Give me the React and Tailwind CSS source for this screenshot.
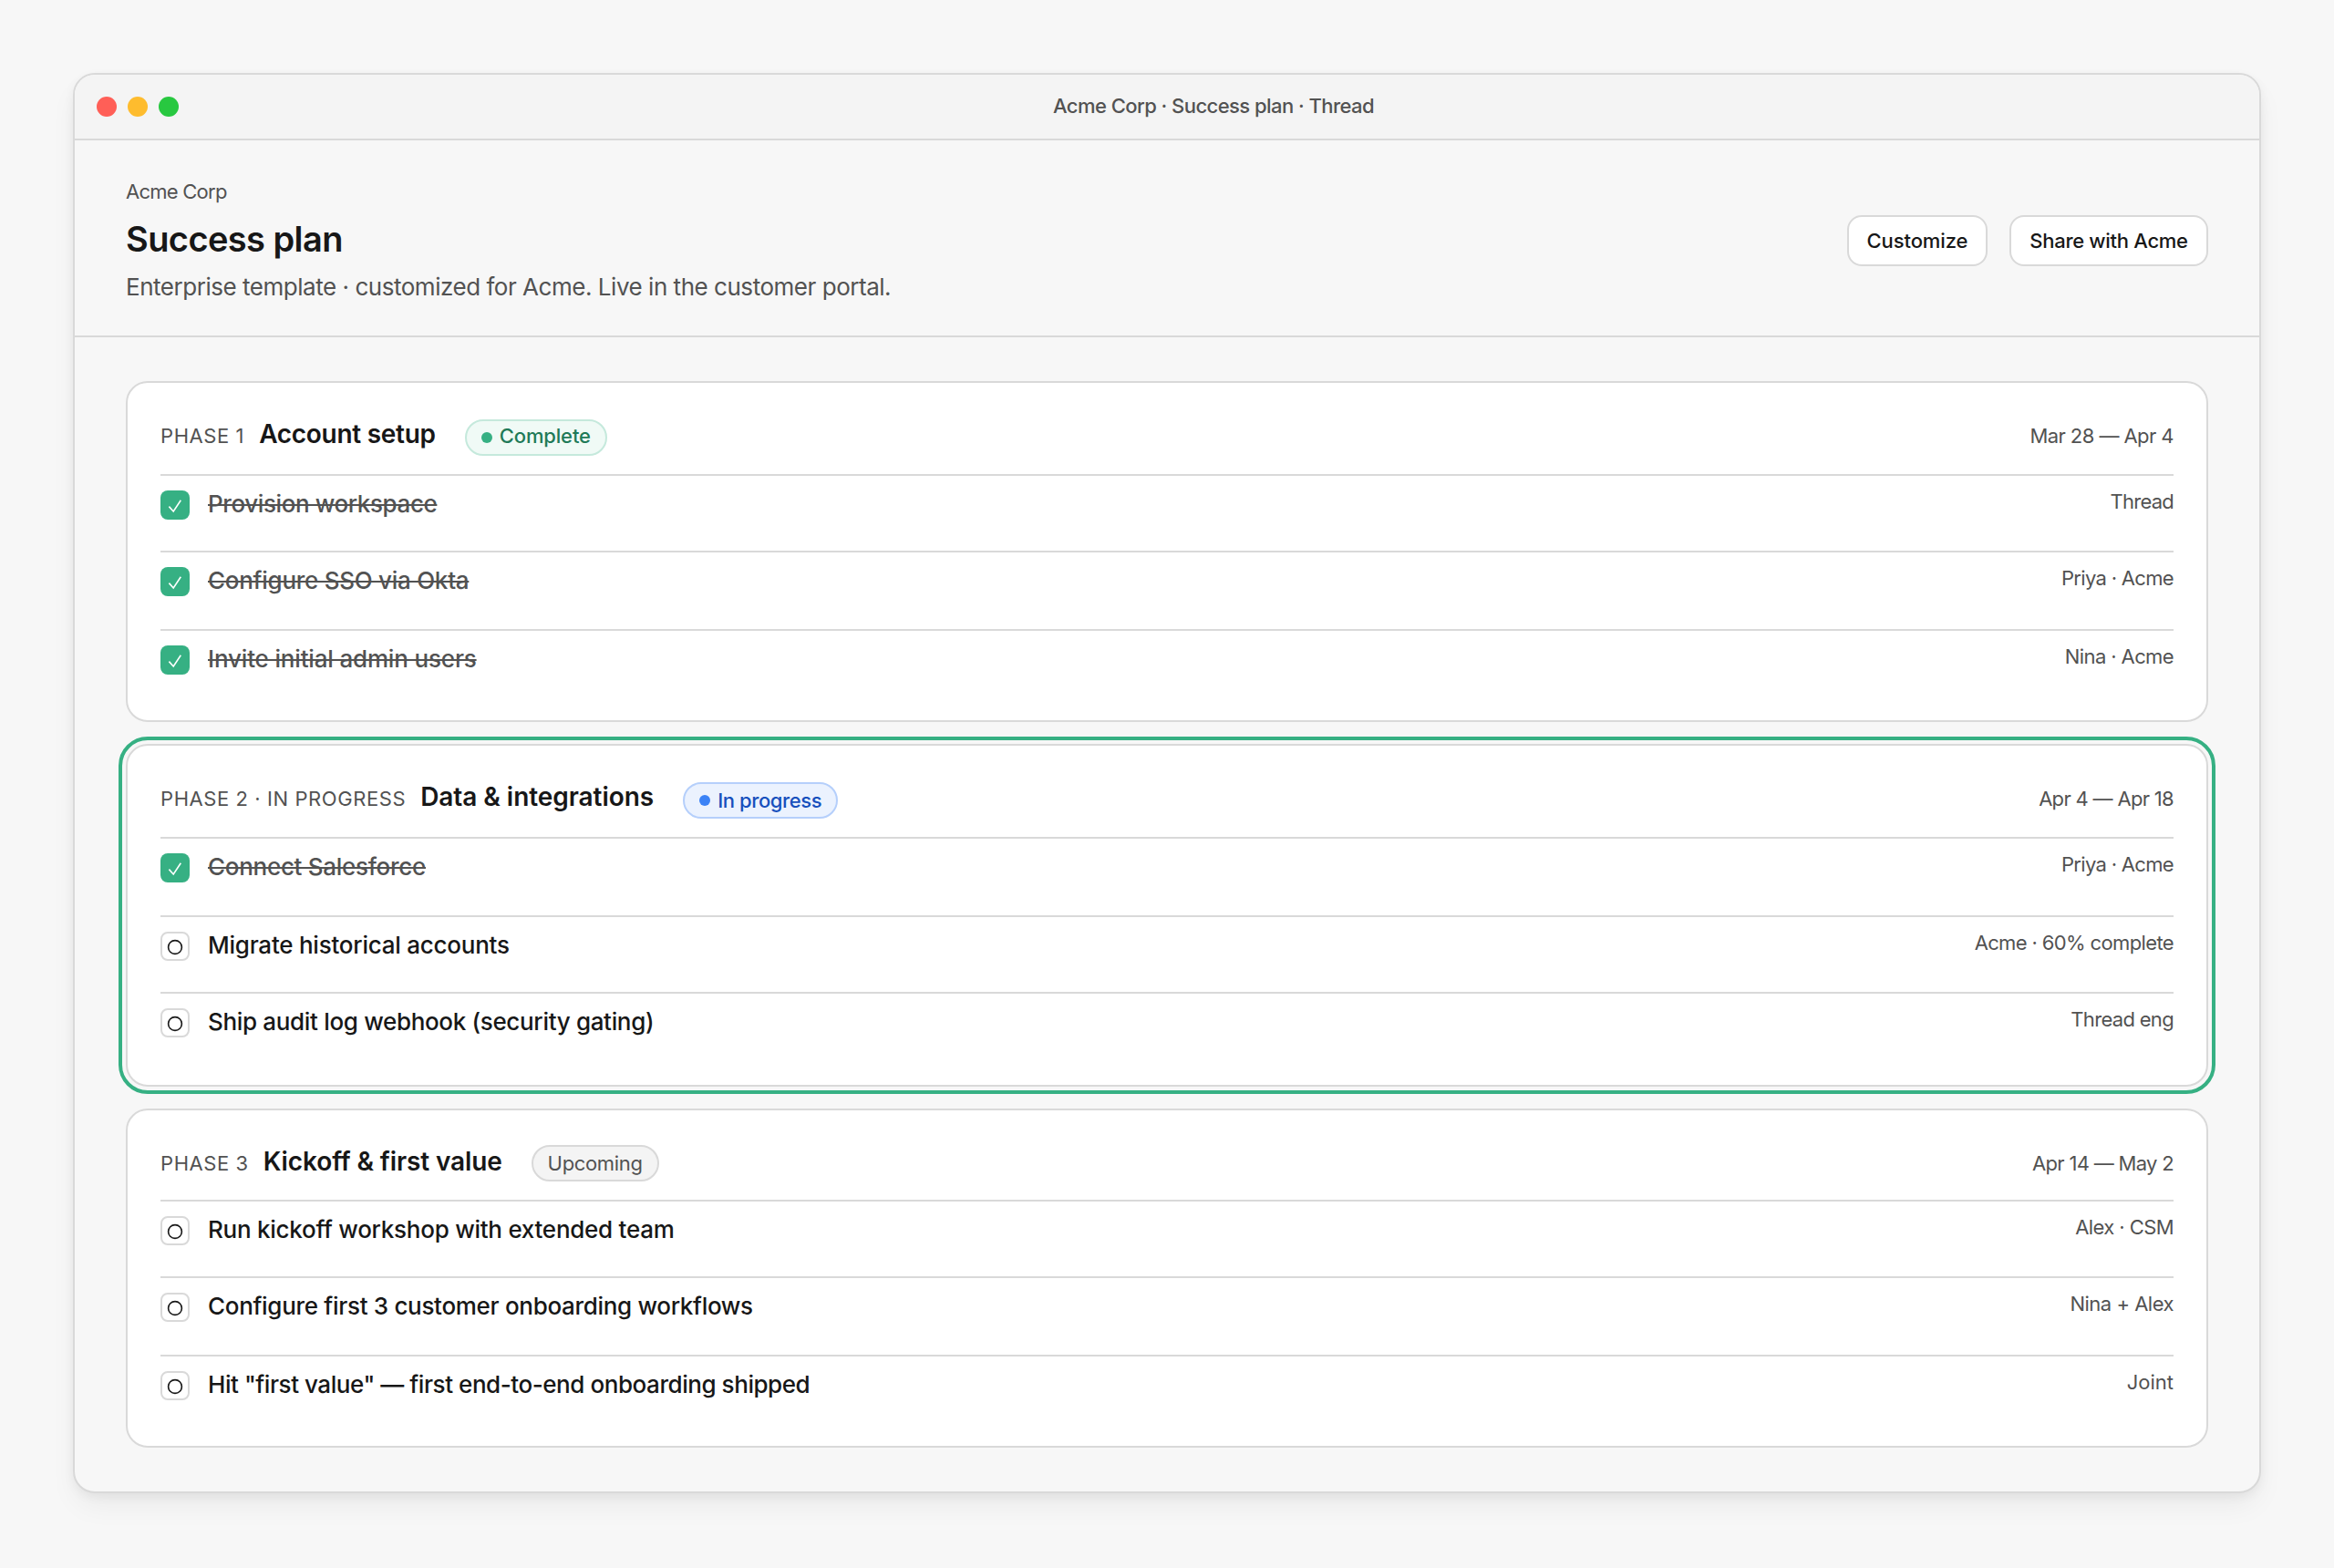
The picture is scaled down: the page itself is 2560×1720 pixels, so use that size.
import React from 'react';
import clsx from 'clsx';

const phases = [
  {
    label: 'Phase 1',
    title: 'Account setup',
    titleClass: 'tracking-[-0.28px]',
    status: 'complete',
    statusLabel: 'Complete',
    dates: 'Mar 28 — Apr 4',
    datesClass: 'tracking-[-0.56px]',
    headerClass: 'h-[100px]',
    tasks: [
      { name: 'Provision workspace', owner: 'Thread', done: true, rowClass: 'h-[84px]', nameClass: 'tracking-[-0.4px]', ownerClass: 'tracking-[-0.75px]' },
      { name: 'Configure SSO via Okta', owner: 'Priya · Acme', done: true, rowClass: 'h-[86px]', nameClass: 'tracking-[-0.27px]', ownerClass: 'tracking-[-0.68px]' },
      { name: 'Invite initial admin users', owner: 'Nina · Acme', done: true, rowClass: 'h-[100px]', nameClass: 'tracking-[-0.17px]', ownerClass: 'tracking-[-0.6px]' },
    ],
  },
  {
    label: 'Phase 2 · In progress',
    title: 'Data & integrations',
    titleClass: 'tracking-[-0.05px]',
    status: 'progress',
    statusLabel: 'In progress',
    dates: 'Apr 4 — Apr 18',
    datesClass: 'tracking-[-0.68px]',
    headerClass: 'h-[100px]',
    active: true,
    tasks: [
      { name: 'Connect Salesforce', owner: 'Priya · Acme', done: true, rowClass: 'h-[86px]', nameClass: 'tracking-[-0.29px]', ownerClass: 'tracking-[-0.68px]' },
      { name: 'Migrate historical accounts', owner: 'Acme · 60% complete', rowClass: 'h-[84px]', nameClass: 'tracking-[-0.24px]', ownerClass: 'tracking-[-0.63px]' },
      { name: 'Ship audit log webhook (security gating)', owner: 'Thread eng', rowClass: 'h-[102px]', nameClass: 'tracking-[-0.33px]', ownerClass: 'tracking-[-0.68px]' },
    ],
  },
  {
    label: 'Phase 3',
    title: 'Kickoff & first value',
    titleClass: 'tracking-[-0.12px]',
    status: 'upcoming',
    statusLabel: 'Upcoming',
    dates: 'Apr 14 — May 2',
    datesClass: 'tracking-[-0.68px]',
    headerClass: 'h-[98px]',
    tasks: [
      { name: 'Run kickoff workshop with extended team', owner: 'Alex · CSM', rowClass: 'h-[84px]', nameClass: 'tracking-[-0.26px]', ownerClass: 'tracking-[-0.58px]' },
      { name: 'Configure first 3 customer onboarding workflows', owner: 'Nina + Alex', rowClass: 'h-[86px]', nameClass: 'tracking-[-0.31px]', ownerClass: 'tracking-[-0.5px]' },
      { name: 'Hit "first value" — first end-to-end onboarding shipped', owner: 'Joint', rowClass: 'h-[100px]', nameClass: 'tracking-[-0.44px]', ownerClass: 'tracking-normal' },
    ],
  },
];

const badgeStyles = {
  complete: 'mt-1 border-[#c5e9dc] bg-[#f0faf6] text-[#1f7a58] font-medium tracking-[-0.15px]',
  progress: 'mt-1 border-[#b5cffb] bg-[#ebf2fe] text-[#1750bd] font-medium tracking-[-0.4px]',
  upcoming: 'mt-0.5 border-[#d9d9d9] bg-[#f4f4f4] text-[#525252] tracking-[-0.34px]',
};

const StatusBadge = ({ status, children }) => (
  <span className={clsx('ml-4 flex h-10 items-center gap-2 self-start rounded-full border-2 px-4 text-[22px] leading-7', badgeStyles[status])}>
    {status !== 'upcoming' && (
      <span className={clsx('size-3 rounded-full', status === 'complete' ? 'bg-[#36b083]' : 'bg-[#3b82f6]')} />
    )}
    <span className={clsx(status === 'complete' && 'pb-1')}>{children}</span>
  </span>
);

const Checkbox = ({ done }) =>
  done ? (
    <span className="mt-0.5 size-8 shrink-0 rounded-lg bg-[#36b083]">
      <svg viewBox="0 0 32 32" className="size-8" fill="none" stroke="#fff" strokeWidth="1.6">
        <path d="M9.4 17.6 14.2 23 22.3 10.8" />
      </svg>
    </span>
  ) : (
    <span className="mt-0.5 size-8 shrink-0 rounded-lg border-2 border-[#d9d9d9] bg-white">
      <svg viewBox="2 2 28 28" className="size-7" fill="none" stroke="#171717" strokeWidth="1.6">
        <circle cx="16" cy="17" r="7.4" />
      </svg>
    </span>
  );

const TaskRow = ({ task }) => (
  <li className={clsx('flex items-start gap-5 border-t-2 border-[#d9d9d9] pt-3.5', task.rowClass)}>
    <Checkbox done={task.done} />
    <span
      className={clsx(
        'text-[26px] leading-[33px] font-medium',
        task.done ? 'text-[#525252] line-through decoration-2' : 'text-[#171717]',
        task.nameClass
      )}
    >
      {task.name}
    </span>
    <span className={clsx('ml-auto text-[22px] leading-7 text-[#525252]', task.ownerClass)}>{task.owner}</span>
  </li>
);

const PhaseCard = ({ phase }) => (
  <section
    className={clsx(
      'rounded-3xl border-2 border-[#d9d9d9] bg-white px-9',
      phase.active && 'outline-4 outline-offset-4 outline-[#36b083]'
    )}
  >
    <div className={clsx('flex items-baseline gap-4 pt-9', phase.headerClass)}>
      <span className="text-[22px] leading-7 tracking-[0.58px] text-[#525252] uppercase">{phase.label}</span>
      <h2 className={clsx('text-[28px] leading-10 font-semibold text-[#171717]', phase.titleClass)}>{phase.title}</h2>
      <StatusBadge status={phase.status}>{phase.statusLabel}</StatusBadge>
      <span className={clsx('ml-auto text-[22px] leading-7 text-[#525252]', phase.datesClass)}>{phase.dates}</span>
    </div>
    <ul>
      {phase.tasks.map((task) => (
        <TaskRow key={task.name} task={task} />
      ))}
    </ul>
  </section>
);

const App = () => {
  return (
    <div className="h-[1720px] w-[2560px] overflow-hidden bg-[#f7f7f7] p-20 font-[Inter,sans-serif] text-[#171717]">
      <div className="h-[1558px] rounded-3xl border-2 border-[#d9d9d9] bg-[#f7f7f7] shadow-[0_4px_12px_rgba(0,0,0,0.05),0_16px_32px_-4px_rgba(0,0,0,0.06)]">
        {/* Title bar */}
        <div className="flex h-[72px] items-center gap-3 rounded-t-[22px] border-b-2 border-[#d9d9d9] bg-[#f4f4f4] px-6">
          <span className="size-[22px] rounded-full bg-[#ff5f57]" />
          <span className="size-[22px] rounded-full bg-[#febc2e]" />
          <span className="size-[22px] rounded-full bg-[#28c840]" />
          <span className="flex-1 pb-0.5 text-center text-[22px] leading-7 font-medium tracking-[-0.55px] text-[#525252]">
            Acme Corp · Success plan · Thread
          </span>
        </div>

        {/* Plan header */}
        <header className="flex h-[216px] items-start justify-between border-b-2 border-[#d9d9d9] px-14 pt-10">
          <div>
            <p className="text-[22px] leading-8 tracking-[-0.75px] text-[#525252]">Acme Corp</p>
            <h1 className="mt-3 text-[38px] leading-[48px] font-semibold tracking-[-0.58px]">Success plan</h1>
            <p className="mt-[9px] text-[26px] leading-10 tracking-[-0.47px] text-[#525252]">
              Enterprise template · customized for Acme. Live in the customer portal.
            </p>
          </div>
          <div className="flex h-[140px] items-center gap-6">
            <button className="h-14 w-[154px] rounded-2xl border-2 border-[#d9d9d9] bg-white text-[22px] leading-7 font-medium tracking-[-0.1px]">
              Customize
            </button>
            <button className="h-14 w-[218px] rounded-2xl border-2 border-[#d9d9d9] bg-white text-[22px] leading-7 font-medium tracking-[-0.3px]">
              Share with Acme
            </button>
          </div>
        </header>

        {/* Phases */}
        <main className="flex flex-col gap-6 px-14 pt-12">
          {phases.map((phase) => (
            <PhaseCard key={phase.label} phase={phase} />
          ))}
        </main>
      </div>
    </div>
  );
};

export default App;
